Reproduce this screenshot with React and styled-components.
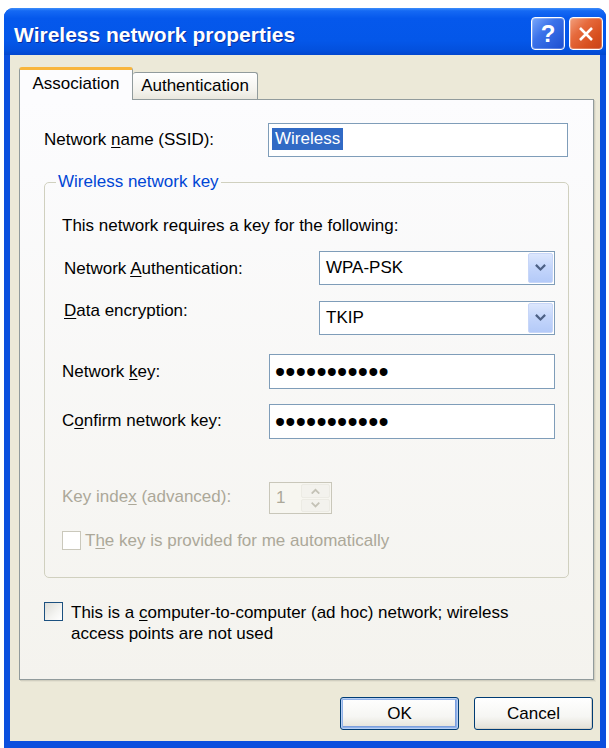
import React from 'react';
import styled, { createGlobalStyle } from 'styled-components';

const Global = createGlobalStyle`
  html, body { margin: 0; padding: 0; background: #ffffff; }
  body { font-family: "Liberation Sans", Arial, sans-serif; color: #000; }
  * { box-sizing: border-box; }
`;

const Window = styled.div`
  margin: 8px 0 0 4px;
  width: 602px;
  height: 740px;
  display: flex;
  flex-direction: column;
  border-radius: 9px 9px 0 0;
  overflow: hidden;
  background: #0a4fde;
`;

const TitleBar = styled.div`
  height: 47px;
  flex: none;
  display: flex;
  align-items: center;
  padding: 9px 3px 5px 10px;
  background: linear-gradient(
    to bottom,
    #3d8efa 0%,
    #1569f4 6%,
    #0558ec 22%,
    #0457e9 70%,
    #0350dd 90%,
    #0347ce 100%
  );
`;

const Title = styled.div`
  flex: 1;
  color: #ffffff;
  font-weight: bold;
  font-size: 21px;
  line-height: 33px;
  padding-top: 2px;
  text-shadow: 1px 1px 0 #0a2f9e;
  white-space: nowrap;
`;

const CaptionButtons = styled.div`
  display: flex;
  gap: 4px;
  height: 33px;
`;

const CaptionButton = styled.div`
  width: 34px;
  height: 33px;
  border: 1px solid #ffffff;
  border-radius: 4px;
  display: flex;
  align-items: center;
  justify-content: center;
  color: #ffffff;
  font-weight: bold;
  font-size: 24px;
  background: ${(p) =>
    p.$variant === 'close'
      ? 'linear-gradient(135deg, #f2a07e 0%, #e66a3c 35%, #d8501f 70%, #c8431a 100%)'
      : 'linear-gradient(135deg, #7aa8fb 0%, #3b72ea 40%, #1d4fcf 100%)'};
  box-shadow: inset 0 0 0 1px rgba(255, 255, 255, 0.25);
`;

const Frame = styled.div`
  flex: 1;
  display: flex;
  flex-direction: column;
  background: #ece9d8;
  border-style: solid;
  border-color: #0a4fde;
  border-width: 0 6px 7px 6px;
  padding: 12px 6px 11px 9px;
`;

const TabRow = styled.div`
  display: flex;
  align-items: flex-end;
  height: 33px;
  position: relative;
  z-index: 1;
`;

const Tab = styled.div`
  font-size: 17px;
  display: flex;
  align-items: center;
  justify-content: center;
  border: 1px solid #919b9c;
  border-bottom: none;
  border-radius: 3px 3px 0 0;
  width: ${(p) => p.$width}px;
  height: ${(p) => (p.$active ? 33 : 27)}px;
  margin-bottom: ${(p) => (p.$active ? 0 : 1)}px;
  padding-bottom: ${(p) => (p.$active ? 2 : 0)}px;
  background: ${(p) =>
    p.$active ? '#fcfcfe' : 'linear-gradient(to bottom, #ffffff, #f3f2ec 70%, #e9e7de)'};
  border-top: ${(p) => (p.$active ? '3px solid #f8b53c' : '1px solid #919b9c')};
  border-left-width: ${(p) => (p.$active ? 1 : 0)}px;
`;

const Panel = styled.div`
  margin-top: -1px;
  height: 581px;
  flex: none;
  border: 1px solid #919b9c;
  background: linear-gradient(to bottom, #fcfcfe, #f4f3ee);
  box-shadow: 1px 1px 0 #d0cebf, 2px 2px 0 #e3e0d0;
  padding: 0 0 0 24px;
  display: flex;
  flex-direction: column;
  position: relative;
  z-index: 0;
`;

const Row = styled.div`
  display: flex;
  align-items: flex-start;
  margin-top: ${(p) => p.$top}px;
`;

const Label = styled.div`
  font-size: 17px;
  line-height: 20px;
  width: ${(p) => p.$width}px;
  padding-left: ${(p) => p.$indent || 0}px;
  margin-top: ${(p) => p.$offset || 0}px;
  color: ${(p) => (p.$disabled ? '#aca899' : '#000')};
  white-space: nowrap;
  flex: none;
`;

const Key = styled.span`
  text-decoration: underline;
  text-underline-offset: 2px;
`;

const TextBox = styled.div`
  width: ${(p) => p.$width}px;
  height: ${(p) => p.$height}px;
  border: 1px solid #7f9db9;
  background: #ffffff;
  display: flex;
  align-items: center;
  padding-left: ${(p) => p.$pad}px;
  font-size: 17px;
`;

const Selected = styled.span`
  background: #316ac5;
  color: #ffffff;
  line-height: 22px;
  padding: 0 3px 0 3px;
  margin-top: -3px;
`;

const Dots = styled.span`
  font-size: 29px;
  letter-spacing: 0.2px;
  line-height: 20px;
`;

const Select = styled.div`
  width: 236px;
  height: 34px;
  border: 1px solid #7f9db9;
  background: #ffffff;
  display: flex;
  align-items: stretch;
  padding: 1px;
  font-size: 17px;
`;

const SelectValue = styled.div`
  flex: 1;
  display: flex;
  align-items: center;
  padding-left: 5px;
`;

const DropButton = styled.div`
  width: 25px;
  border-radius: 2px;
  background: linear-gradient(to bottom, #dce7fd, #c3d5fb 50%, #b4caf8);
  border: 1px solid #c7d6f8;
  display: flex;
  align-items: center;
  justify-content: center;
`;

const Group = styled.fieldset`
  margin: 15px 0 0 0;
  padding: 0;
  width: 525px;
  border: 1px solid #d0d0bf;
  border-radius: 5px;
  min-inline-size: 0;
`;

const Legend = styled.legend`
  margin-left: 11px;
  padding: 0 2px;
  font-size: 17px;
  line-height: 20px;
  color: #0046d5;
`;

const GroupBody = styled.div`
  display: flex;
  flex-direction: column;
  padding: 0 0 27px 17px;
`;

const Text = styled.div`
  font-size: 17px;
  line-height: ${(p) => p.$lh || 20}px;
  margin-top: ${(p) => p.$top || 0}px;
  color: ${(p) => (p.$disabled ? '#aca899' : '#000')};
`;

const Spinner = styled.div`
  width: 63px;
  height: 32px;
  border: 1px solid #c9c7ba;
  background: #f7f6f0;
  display: flex;
  align-items: stretch;
  padding: 1px;
`;

const SpinValue = styled.div`
  flex: 1;
  display: flex;
  align-items: center;
  padding-left: 5px;
  font-size: 17px;
  color: #aca899;
`;

const SpinButtons = styled.div`
  width: 29px;
  display: flex;
  flex-direction: column;
  gap: 1px;
`;

const SpinButton = styled.div`
  flex: 1;
  border-radius: 2px;
  background: #f3f2ed;
  border: 1px solid #ecebe4;
  display: flex;
  align-items: center;
  justify-content: center;
`;

const CheckRow = styled.div`
  display: flex;
  align-items: flex-start;
  gap: ${(p) => p.$gap}px;
  margin-top: ${(p) => p.$top}px;
`;

const CheckBox = styled.div`
  width: 19px;
  height: 19px;
  flex: none;
  border: 1px solid ${(p) => (p.$disabled ? '#cac8bb' : '#1c5180')};
  background: ${(p) =>
    p.$disabled ? '#ffffff' : 'linear-gradient(135deg, #dcdcd7 0%, #f4f4f1 60%, #ffffff 100%)'};
  margin-top: ${(p) => p.$offset || 0}px;
`;

const ButtonRow = styled.div`
  display: flex;
  justify-content: flex-end;
  gap: 15px;
  margin-top: 17px;
  padding-right: 1px;
`;

const Button = styled.button`
  width: 119px;
  height: 33px;
  border: 1px solid #003c74;
  border-radius: 3px;
  background: linear-gradient(to bottom, #ffffff 0%, #f6f6f3 60%, #e3e0d6 100%);
  font-family: "Liberation Sans", Arial, sans-serif;
  font-size: 17px;
  color: #000;
  padding: 0;
  box-shadow: ${(p) =>
    p.$default
      ? 'inset 0 0 0 1px #b9cff3, inset 0 0 0 2px #91b2e8, inset -1px -1px 0 2px #7d9fde'
      : 'inset -1px -1px 0 0 #d6d0c5'};
`;

const Chevron = ({ dir = 'down', color = '#4d6185', size = 11 }) => (
  <svg width={size} height={size * 0.7} viewBox="0 0 10 7">
    <path
      d={dir === 'down' ? 'M1.5 1.5 L5 5 L8.5 1.5' : 'M1.5 5.5 L5 2 L8.5 5.5'}
      fill="none"
      stroke={color}
      strokeWidth="2"
      strokeLinecap="square"
    />
  </svg>
);

export default function App() {
  return (
    <>
      <Global />
      <Window>
        <TitleBar>
          <Title>Wireless network properties</Title>
          <CaptionButtons>
            <CaptionButton $variant="help">?</CaptionButton>
            <CaptionButton $variant="close">
              <svg width="18" height="18" viewBox="0 0 18 18">
                <path d="M3 3 L15 15 M15 3 L3 15" stroke="#ffffff" strokeWidth="2.6" />
              </svg>
            </CaptionButton>
          </CaptionButtons>
        </TitleBar>
        <Frame>
          <TabRow>
            <Tab $active $width={114}>Association</Tab>
            <Tab $width={125}>Authentication</Tab>
          </TabRow>
          <Panel>
            <Row $top={23}>
              <Label $width={224} $offset={7}>
                Network <Key>n</Key>ame (SSID):
              </Label>
              <TextBox $width={300} $height={34} $pad={3}>
                <Selected>Wireless</Selected>
              </TextBox>
            </Row>
            <Group>
              <Legend>Wireless network key</Legend>
              <GroupBody>
                <Text $top={24}>This network requires a key for the following:</Text>
                <Row $top={15}>
                  <Label $width={257} $indent={2} $offset={8}>
                    Network <Key>A</Key>uthentication:
                  </Label>
                  <Select>
                    <SelectValue>WPA-PSK</SelectValue>
                    <DropButton>
                      <Chevron />
                    </DropButton>
                  </Select>
                </Row>
                <Row $top={16}>
                  <Label $width={257} $indent={2} $offset={0}>
                    <Key>D</Key>ata encryption:
                  </Label>
                  <Select>
                    <SelectValue>TKIP</SelectValue>
                    <DropButton>
                      <Chevron />
                    </DropButton>
                  </Select>
                </Row>
                <Row $top={19}>
                  <Label $width={207} $offset={8}>
                    Network <Key>k</Key>ey:
                  </Label>
                  <TextBox $width={286} $height={35} $pad={5}>
                    <Dots>•••••••••••</Dots>
                  </TextBox>
                </Row>
                <Row $top={15}>
                  <Label $width={207} $offset={7}>
                    C<Key>o</Key>nfirm network key:
                  </Label>
                  <TextBox $width={286} $height={35} $pad={5}>
                    <Dots>•••••••••••</Dots>
                  </TextBox>
                </Row>
                <Row $top={43}>
                  <Label $width={207} $offset={5} $disabled>
                    Key inde<Key>x</Key> (advanced):
                  </Label>
                  <Spinner>
                    <SpinValue>1</SpinValue>
                    <SpinButtons>
                      <SpinButton>
                        <Chevron dir="up" color="#c4c2b6" size={9} />
                      </SpinButton>
                      <SpinButton>
                        <Chevron dir="down" color="#c4c2b6" size={9} />
                      </SpinButton>
                    </SpinButtons>
                  </Spinner>
                </Row>
                <CheckRow $top={17} $gap={4}>
                  <CheckBox $disabled />
                  <Text $lh={19} $disabled>
                    T<Key>h</Key>e key is provided for me automatically
                  </Text>
                </CheckRow>
              </GroupBody>
            </Group>
            <CheckRow $top={24} $gap={8}>
              <CheckBox />
              <Text $lh={21}>
                This is a <Key>c</Key>omputer-to-computer (ad hoc) network; wireless
                <br />
                access points are not used
              </Text>
            </CheckRow>
          </Panel>
          <ButtonRow>
            <Button $default>OK</Button>
            <Button>Cancel</Button>
          </ButtonRow>
        </Frame>
      </Window>
    </>
  );
}
